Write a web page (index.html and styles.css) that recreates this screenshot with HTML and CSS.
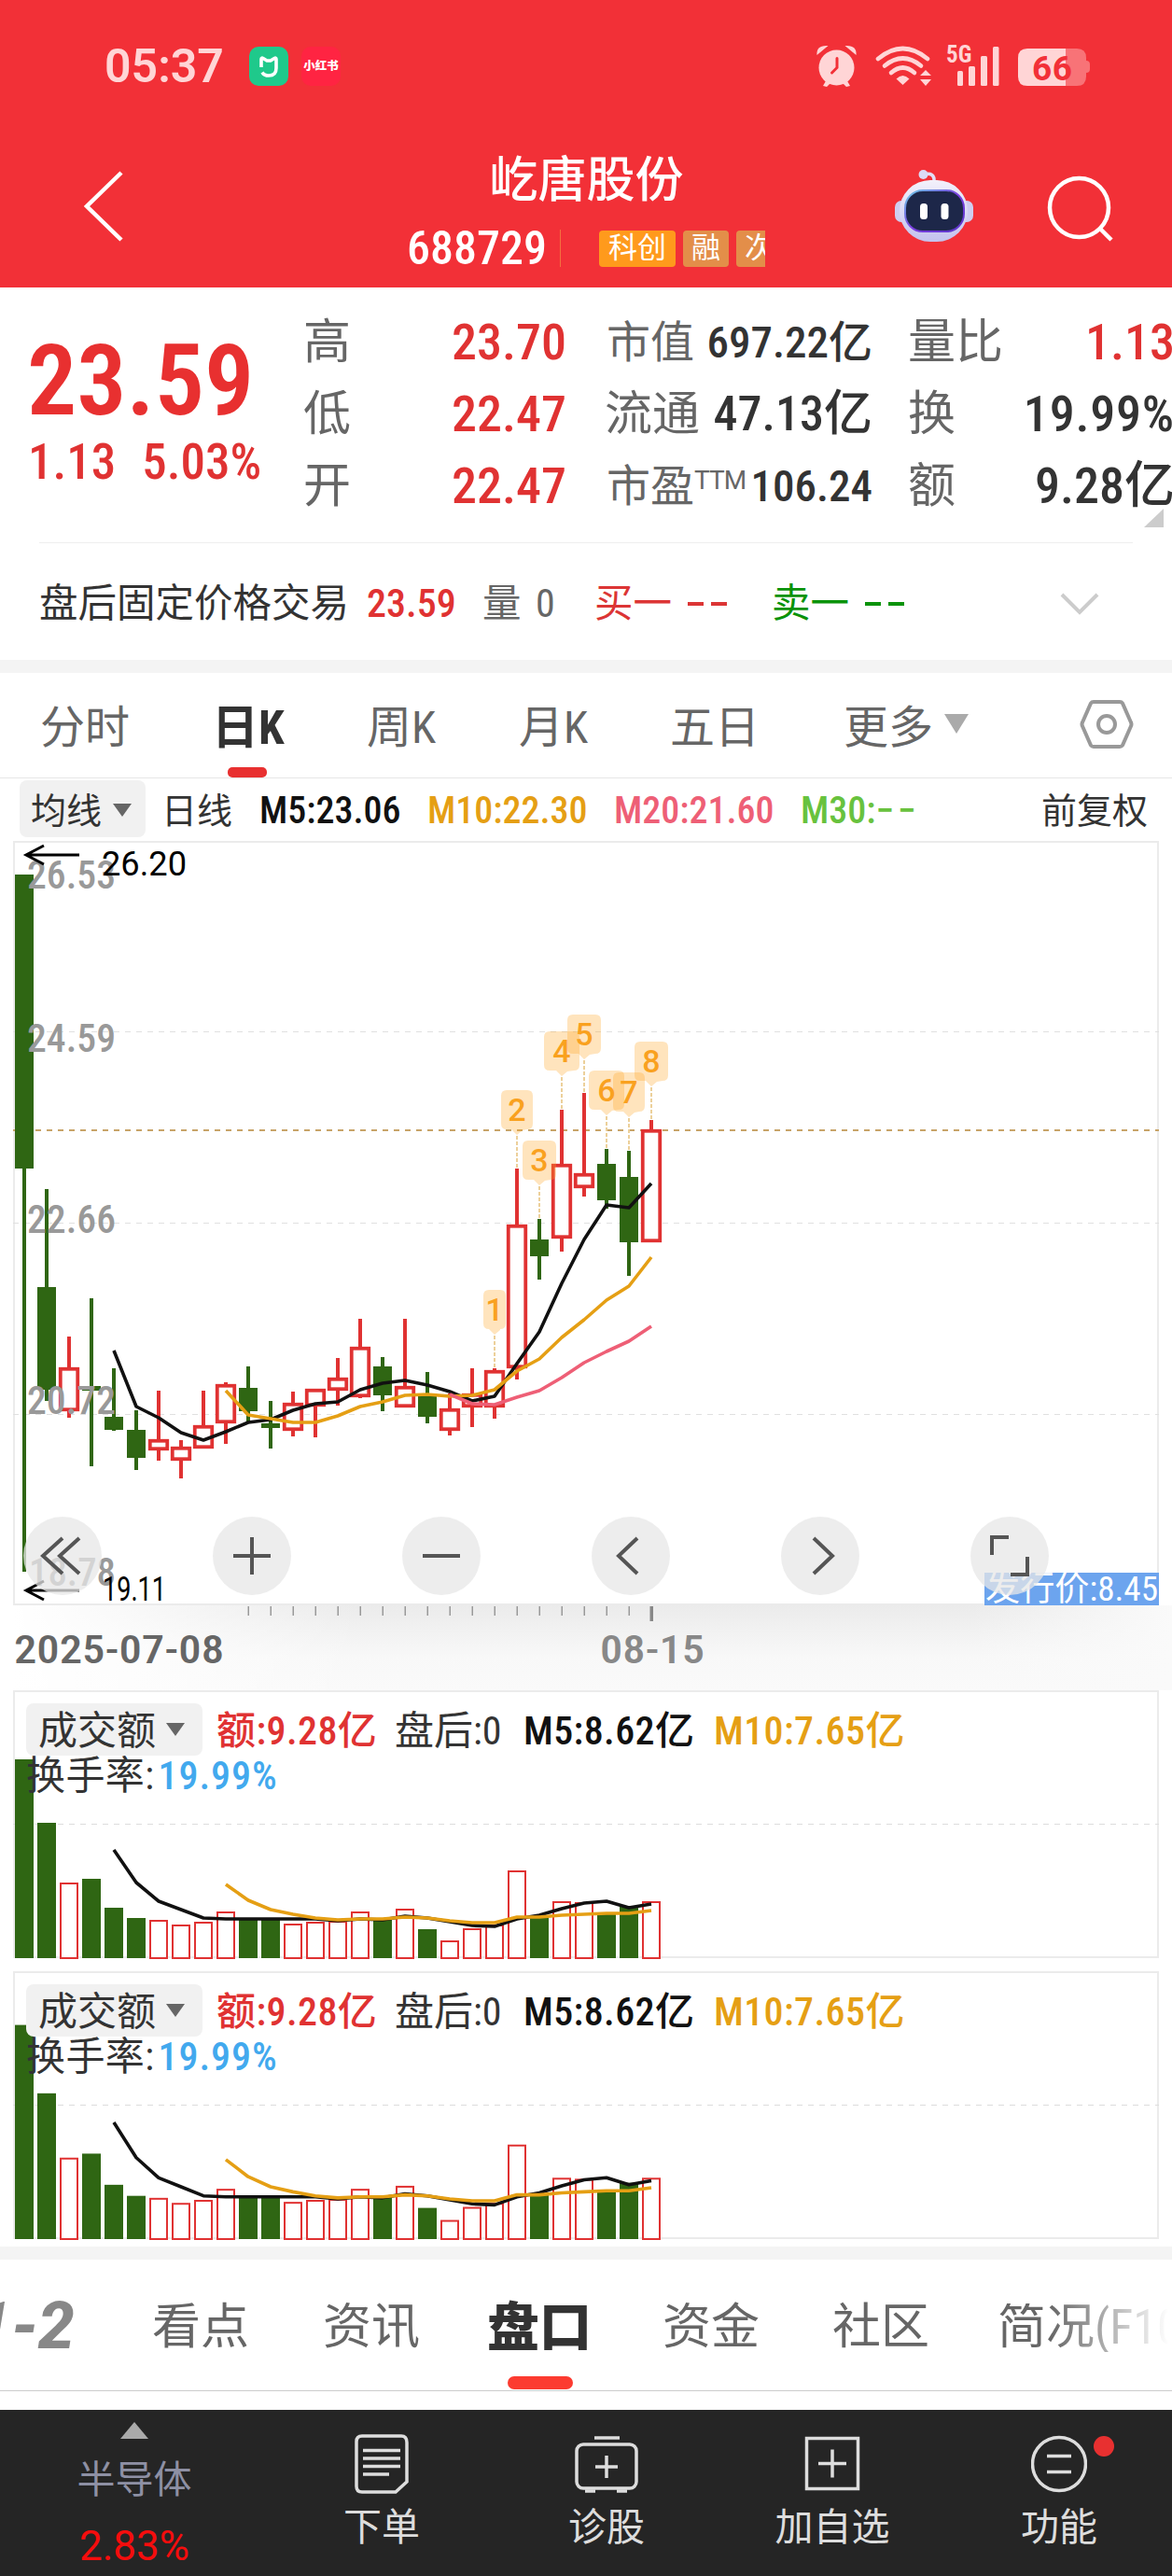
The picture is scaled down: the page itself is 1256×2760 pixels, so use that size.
FILE: index.html
```html
<!DOCTYPE html>
<html lang="zh-CN">
<head>
    <meta charset="UTF-8">
    <title>屹唐股份 688729</title>
    <link rel="stylesheet" href="styles.css">
</head>
<body>
    <header class="header">
        <div class="status-bar">
            <span class="clock">05:37</span>
            <svg class="app-icon" width="42" height="42" viewBox="0 0 42 42">
                <rect width="42" height="42" rx="10" fill="#1fc98b"/>
                <path d="M13 22V13.500q0-2 2-1l4 2.500h4l4-2.500q2-1 2 1V23q0 8-8 8q-5 0-7-3.500" fill="none" stroke="#fff" stroke-width="3.600"/>
            </svg>
            <span class="xhs">小红书</span>
            <svg class="status-icons" width="310" height="58" viewBox="870 42 310 58">
                <g fill="#ffd5d6">
                    <circle cx="896.500" cy="72.500" r="19"/>
                    <path d="M875.500 59q-1-11 12-10z"/>
                    <path d="M917.500 59q1-11-12-10z"/>
                    <path d="M882 92l4-7 5 3-5 5zM911 92l-4-7-5 3 5 5z"/>
                    <path d="M967.500 91l-7-6.500q7-7 14 0z"/>
                    <path d="M992 75l6 6h-12zM992 92l6-7h-12z"/>
                    <rect x="1026" y="76" width="6" height="16" rx="1.500"/>
                    <rect x="1038" y="71" width="7" height="21" rx="1.500"/>
                    <rect x="1051" y="60" width="7" height="32" rx="1.500"/>
                    <rect x="1064" y="50" width="6.500" height="42" rx="1.500"/>
                    <path d="M1101 52h41v40h-41q-10 0-10-10V62q0-10 10-10z"/>
                </g>
                <path d="M897 62.500v10l-5.500 5.500" fill="none" stroke="#f23037" stroke-width="3" stroke-linecap="round"/>
                <g fill="none" stroke="#ffd5d6" stroke-width="4.600" stroke-linecap="round">
                    <path d="M941 63q26.500-22 53 0"/>
                    <path d="M948 70.500q19.500-16 39 0"/>
                    <path d="M955 78q12.500-11 25 0"/>
                </g>
                <path d="M1142 52h12q10 0 10 10v3q4 0 4 4v5q0 4-4 4v4q0 10-10 10h-12z" fill="#f87377"/>
                <text x="1014" y="67" class="net">5G</text>
                <text x="1106" y="86" class="battery" textLength="43">66</text>
            </svg>
        </div>
        <div class="title-bar">
            <svg class="back" width="50" height="80" viewBox="86 181 50 80">
                <path d="M130 185L93 221L130 257" fill="none" stroke="#fff" stroke-width="4.500"/>
            </svg>
            <div class="stock">
                <h1>屹唐股份</h1>
                <div class="code-row">
                    <span class="code">688729</span>
                    <span class="tag tag-main">科创</span>
                    <span class="tag">融</span>
                    <span class="tag">次</span>
                </div>
            </div>
            <svg class="robot" width="88" height="84" viewBox="957 179 88 84">
                <defs>
                    <linearGradient id="shell" x1="0" y1="0" x2="0" y2="1">
                        <stop offset="0" stop-color="#f3f1fb"/>
                        <stop offset="1" stop-color="#c3c2ee"/>
                    </linearGradient>
                    <linearGradient id="rim" x1="0" y1="0" x2="1" y2="1">
                        <stop offset="0" stop-color="#6fd0e8"/>
                        <stop offset=".5" stop-color="#7a3fe0"/>
                        <stop offset="1" stop-color="#5a35c8"/>
                    </linearGradient>
                </defs>
                <rect x="959" y="215" width="84" height="23" rx="7" fill="#cfcdf0"/>
                <path d="M990 187q12-3 11 8" fill="none" stroke="#e2def6" stroke-width="3.500"/>
                <circle cx="989.500" cy="187" r="5" fill="#dcdaf6"/>
                <rect x="964" y="193" width="73" height="66" rx="33" fill="url(#shell)"/>
                <rect x="970" y="204" width="63" height="44" rx="19" fill="#1d2749" stroke="url(#rim)" stroke-width="2"/>
                <rect x="986" y="218" width="8" height="17" rx="3.500" fill="#fff"/>
                <rect x="1008.500" y="218" width="8" height="17" rx="3.500" fill="#fff"/>
            </svg>
            <svg class="search" width="76" height="76" viewBox="1120 185 76 76">
                <circle cx="1156.500" cy="222.500" r="31.500" fill="none" stroke="#fff" stroke-width="4.500"/>
                <path d="M1178 244L1191 257" stroke="#fff" stroke-width="4.500"/>
            </svg>
        </div>
    </header>

    <section class="quote">
        <div class="price-box">
            <div class="price">23.59</div>
            <div class="change"><span>1.13</span><span>5.03%</span></div>
        </div>
        <dl>
            <div><dt>高</dt><dd class="red">23.70</dd></div>
            <div><dt>低</dt><dd class="red">22.47</dd></div>
            <div><dt>开</dt><dd class="red">22.47</dd></div>
        </dl>
        <dl class="mid">
            <div class="small"><dt>市值</dt><dd>697.22亿</dd></div>
            <div><dt>流通</dt><dd class="tight">47.13亿</dd></div>
            <div class="small"><dt>市盈<sup>TTM</sup></dt><dd>106.24</dd></div>
        </dl>
        <dl class="last">
            <div><dt>量比</dt><dd class="red">1.13</dd></div>
            <div><dt>换</dt><dd class="wide">19.99%</dd></div>
            <div><dt>额</dt><dd>9.28亿</dd></div>
        </dl>
        <i class="corner"></i>
    </section>

    <section class="after-hours">
        <span>盘后固定价格交易</span>
        <span class="num red">23.59</span>
        <span class="gray">量</span>
        <span class="num gray">0</span>
        <span class="buy">买一</span>
        <span class="dash buy"><i></i><i></i></span>
        <span class="sell">卖一</span>
        <span class="dash sell"><i></i><i></i></span>
        <svg width="44" height="26" viewBox="0 0 44 26"><path d="M3 3L22 22L41 3" fill="none" stroke="#ccc" stroke-width="4"/></svg>
    </section>

    <nav class="period-tabs">
        <span>分时</span>
        <span class="active">日K</span>
        <span>周K</span>
        <span>月K</span>
        <span>五日</span>
        <span class="more">更多<i class="caret"></i></span>
        <svg width="58" height="54" viewBox="0 0 58 54" fill="none" stroke="#999" stroke-width="4">
            <path d="M15 3h28q2 0 3 1.500L55 25q1 2 0 4L46 49.500q-1 1.500-3 1.500H15q-2 0-3-1.500L3 29q-1-2 0-4L12 4.500Q13 3 15 3z"/>
            <circle cx="29" cy="27" r="9"/>
        </svg>
    </nav>

    <div class="ma-row">
        <span class="pill">均线<i class="caret"></i></span>
        <span class="cn">日线</span>
        <span class="m5">M5:23.06</span>
        <span class="m10">M10:22.30</span>
        <span class="m20">M20:21.60</span>
        <span class="m30">M30:<em>−−</em></span>
        <span class="cn">前复权</span>
    </div>

    <section class="chart">
        <svg id="kline" width="1256" height="912" viewBox="0 899 1256 912"></svg>
        <div class="controls">
            <button><svg viewBox="0 0 84 84"><path d="M42 23L21 42L42 61M60 23L39 42L60 61"/></svg></button>
            <button><svg viewBox="0 0 84 84"><path d="M22 42H62M42 22V62"/></svg></button>
            <button><svg viewBox="0 0 84 84"><path d="M22 42H62"/></svg></button>
            <button><svg viewBox="0 0 84 84"><path d="M49 23L29 42L49 61"/></svg></button>
            <button><svg viewBox="0 0 84 84"><path d="M35 23L55 42L35 61"/></svg></button>
            <button><svg viewBox="0 0 84 84"><path d="M23 41V22H41M61 43V62H43"/></svg></button>
        </div>
    </section>

    <section class="volume">
        <svg id="vol1" width="1256" height="289" viewBox="0 1811 1256 289"></svg>
        <div class="vol-head">
            <span class="pill">成交额<i class="caret"></i></span>
            <span class="red">额:9.28亿</span>
            <span>盘后:0</span>
            <span class="m5">M5:8.62亿</span>
            <span class="m10">M10:7.65亿</span>
            <span class="turnover">换手率:<b>19.99%</b></span>
        </div>
    </section>
    <section class="volume second">
        <svg id="vol2" width="1256" height="289" viewBox="0 1811 1256 289"></svg>
        <div class="vol-head">
            <span class="pill">成交额<i class="caret"></i></span>
            <span class="red">额:9.28亿</span>
            <span>盘后:0</span>
            <span class="m5">M5:8.62亿</span>
            <span class="m10">M10:7.65亿</span>
            <span class="turnover">换手率:<b>19.99%</b></span>
        </div>
    </section>

    <nav class="info-tabs">
        <span class="level">1-2</span>
        <span>看点</span>
        <span>资讯</span>
        <span class="active">盘口</span>
        <span>资金</span>
        <span>社区</span>
        <span class="fade">简况(F10)</span>
    </nav>

    <footer class="toolbar">
        <div class="sector">
            <i></i>
            <span>半导体</span>
            <b>2.83%</b>
        </div>
        <div class="tool">
            <svg width="58" height="64" viewBox="0 0 58 64">
                <path d="M8 2h42q6 0 6 7v42L44 62H8q-6 0-6-6V8q0-6 6-6z"/>
                <path d="M9 17.500h40M9 26h40M9 34.500h40M9 43h28"/>
            </svg>
            <span>下单</span>
        </div>
        <div class="tool">
            <svg width="68" height="64" viewBox="0 0 68 64">
                <path d="M21 4h27"/>
                <rect x="2" y="11" width="64" height="47" rx="7"/>
                <path d="M22 35h24M34 23v24M11 61h11M45 61h11"/>
            </svg>
            <span>诊股</span>
        </div>
        <div class="tool">
            <svg width="60" height="64" viewBox="0 0 60 64">
                <rect x="2.500" y="4.500" width="55" height="54"/>
                <path d="M15 31.500h30M30 16.500v30"/>
            </svg>
            <span>加自选</span>
        </div>
        <div class="tool">
            <svg width="60" height="64" viewBox="0 0 60 64">
                <circle cx="30" cy="32" r="28.500"/>
                <path d="M17 23.500h26M17 40.500h26"/>
            </svg>
            <i class="dot"></i>
            <span>功能</span>
        </div>
    </footer>

    <script>
    const RED = "#e03232";
    const GREEN = "#2f6613";
    const STEP = 24;
    const cx = i => 26 + STEP * i;

    // [up, body top, body bottom, wick top, wick bottom]
    const candles = [
        [0, 937, 1252, 937, 1684], [0, 1379, 1489, 1274, 1501], [1, 1465, 1512, 1432, 1519],
        [0, 1485, 1490, 1391, 1571], [0, 1518, 1532, 1466, 1533], [0, 1532, 1562, 1511, 1575],
        [1, 1542, 1554, 1490, 1565], [1, 1550, 1565, 1543, 1584], [1, 1527, 1552, 1490, 1552],
        [1, 1483, 1525, 1481, 1547], [0, 1487, 1512, 1464, 1525], [0, 1525, 1530, 1501, 1552],
        [1, 1503, 1533, 1491, 1539], [1, 1488, 1507, 1488, 1540], [1, 1476, 1490, 1455, 1506],
        [1, 1443, 1497, 1413, 1498], [0, 1464, 1495, 1454, 1512], [1, 1485, 1508, 1413, 1508],
        [0, 1494, 1518, 1470, 1525], [1, 1509, 1533, 1493, 1538], [1, 1493, 1508, 1466, 1529],
        [1, 1468, 1508, 1466, 1520], [1, 1312, 1466, 1252, 1478], [0, 1328, 1346, 1306, 1371],
        [1, 1247, 1327, 1189, 1341], [1, 1257, 1273, 1171, 1282], [0, 1247, 1286, 1231, 1295],
        [0, 1261, 1331, 1233, 1367], [1, 1210, 1331, 1200, 1331]
    ];
    const ma5 = [1447, 1507, 1519, 1535, 1543, 1534, 1524, 1521, 1511, 1504, 1502, 1489, 1482, 1479, 1484, 1491, 1501, 1496, 1461, 1427, 1375, 1328, 1291, 1294, 1268];
    const ma10 = [1490, 1516, 1520, 1524, 1524, 1517, 1507, 1502, 1495, 1494, 1496, 1495, 1489, 1469, 1456, 1433, 1414, 1393, 1378, 1347];
    const ma20 = [1494, 1504, 1505, 1497, 1490, 1476, 1460, 1448, 1437, 1421];

    // numbered markers above the last bars: [index, left, right, top]
    const badges = [
        [21, 518, 542, 1382], [22, 537, 571, 1168], [23, 560, 596, 1222], [24, 583, 621, 1105],
        [25, 608, 644, 1087], [26, 631, 669, 1147], [27, 657, 691, 1149], [28, 680, 716, 1116]
    ];

    const volumes = [1885, 1953, 2017, 2013, 2044, 2055, 2057, 2062, 2059, 2048, 2056, 2057, 2061, 2059, 2058, 2048, 2056, 2045, 2067, 2079, 2066, 2062, 2004, 2053, 2037, 2038, 2051, 2042, 2037];
    const vma5 = [1982, 2017, 2037, 2046, 2055, 2056, 2056, 2056, 2056, 2056, 2058, 2056, 2057, 2053, 2055, 2059, 2063, 2064, 2056, 2052, 2045, 2039, 2037, 2044, 2040];
    const vma10 = [2019, 2036, 2046, 2051, 2055, 2057, 2056, 2056, 2054, 2055, 2058, 2060, 2060, 2054, 2054, 2052, 2051, 2050, 2050, 2047];

    function rect(x, y, w, h, attrs) {
        return `<rect x="${x}" y="${y}" width="${w}" height="${h}" ${attrs}/>`;
    }

    function hline(y, color, width) {
        return `<path d="M14 ${y}H1242" stroke="${color}" stroke-width="${width}" stroke-dasharray="6 6"/>`;
    }

    function curve(values, start, color) {
        const points = values.map((y, i) => `${cx(start + i)},${y}`).join(" ");
        return `<polyline points="${points}" fill="none" stroke="${color}" stroke-width="3.600" stroke-linejoin="round"/>`;
    }

    function label(text, x, y, width, cls) {
        return `<text x="${x}" y="${y}" textLength="${width}" lengthAdjust="spacingAndGlyphs" class="${cls}">${text}</text>`;
    }

    function drawKline() {
        let s = `<defs>
            <linearGradient id="shadeX"><stop offset="0" stop-color="#fff"/><stop offset=".3" stop-color="#fff" stop-opacity="0"/></linearGradient>
            <linearGradient id="shadeY" x1="0" y1="0" x2="0" y2="1"><stop offset="0" stop-color="#ebebeb"/><stop offset=".6" stop-color="#f8f8f8"/><stop offset="1" stop-color="#fafafa"/></linearGradient>
            <linearGradient id="shadeEnd"><stop offset="0" stop-color="#fafafa" stop-opacity="0"/><stop offset="1" stop-color="#fafafa"/></linearGradient>
        </defs>`;
        s += rect(14, 1720, 1242, 91, 'fill="url(#shadeY)"');
        s += rect(14, 1720, 1242, 91, 'fill="url(#shadeX)"');
        s += rect(1040, 1720, 216, 91, 'fill="url(#shadeEnd)"');
        s += rect(15, 902, 1226, 817, 'fill="#fff" stroke="#ebebeb" stroke-width="2"');
        [1105.500, 1310.500, 1515.500].forEach(y => s += hline(y, "#e0e0e0", 1));
        s += hline(1211, "#c8a468", 2);

        candles.forEach(([up, top, bottom, high, low], i) => {
            const x = cx(i);
            const color = up ? RED : GREEN;
            s += rect(x - 2, high, 4, low - high, `fill="${color}"`);
            if (up) s += rect(x - 9.250, top + 1.750, 18.500, bottom - top - 3.500, `fill="#fff" stroke="${color}" stroke-width="3.800"`);
            else s += rect(x - 10, top, 20, bottom - top, `fill="${color}"`);
        });
        s += curve(ma5, 4, "#111");
        s += curve(ma10, 9, "#e59f14");
        s += curve(ma20, 19, "#ee5f76");

        badges.forEach(([i, left, right, top], n) => {
            const x = cx(i);
            s += `<path d="M${x} ${top + 49}V${candles[i][3]}" stroke="#ecd09a" stroke-width="2" stroke-dasharray="4 2"/>`;
            s += `<path d="M${left + 6} ${top}H${right - 6}q6 0 6 6v30q0 6-6 6L${x + 6} ${top + 43}L${x} ${top + 48}L${x - 6} ${top + 42}H${left + 6}q-6 0-6-6v-30q0-6 6-6z" fill="#ffa524" fill-opacity=".3"/>`;
            s += `<text x="${(left + right) / 2}" y="${top + 33}" class="badge">${n + 1}</text>`;
        });

        s += label("26.53", 29, 952, 95, "axis") + label("24.59", 29, 1127, 95, "axis") + label("22.66", 29, 1321, 95, "axis") + label("20.72", 29, 1515, 95, "axis") + label("18.78", 31, 1699, 93, "axis");
        s += label("26.20", 109, 938, 91, "extreme") + label("19.11", 110, 1715, 68, "extreme");
        s += '<path d="M28 916H85M47 906L28 916L47 926M28 1704H85M47 1694L28 1704L47 1714" fill="none" stroke="#000" stroke-width="3"/>';
        s += rect(1055, 1685, 187, 35, 'fill="#6ca4ee"') + label("发行价:8.45", 1056, 1715, 185, "issue");

        for (let x = 266; x < 690; x += STEP) s += rect(x - 0.500, 1721, 1.500, 10, 'fill="#999"');
        s += rect(696.500, 1721, 3.500, 16, 'fill="#888"');
        s += label("2025-07-08", 15, 1782, 225, "date") + label("08-15", 643, 1782, 112, "date light");
        document.getElementById("kline").innerHTML = s;
    }

    function drawVolume(id, scale) {
        const y = v => 2098 - (2098 - v) * scale;
        let s = rect(15, 1812, 1226, 285, 'fill="#fff" stroke="#ebebeb" stroke-width="2"') + hline(1954.500, "#ddd", 1);
        volumes.forEach((v, i) => {
            const x = cx(i);
            if (candles[i][0]) s += rect(x - 9, y(v) + 1, 18, 2097 - y(v), `fill="#fff" stroke="${RED}" stroke-width="2"`);
            else s += rect(x - 10, y(v), 20, 2098 - y(v), `fill="${GREEN}"`);
        });
        s += curve(vma5.map(y), 4, "#111") + curve(vma10.map(y), 9, "#e59f14");
        document.getElementById(id).innerHTML = s;
    }

    drawKline();
    drawVolume("vol1", 1);
    drawVolume("vol2", 1.077);
    </script>
</body>
</html>
```
FILE: styles.css
```css
* {
    box-sizing: border-box;
}
body {
    margin: 0;
    width: 1256px;
    height: 2760px;
    overflow: hidden;
    background: #fff;
    color: #333;
    font-family: Roboto, "Noto Sans CJK SC", sans-serif;
    font-stretch: 87.5%;
    line-height: 1;
}
svg {
    display: block;
}
i {
    display: block;
}
span, dt, dd {
    white-space: nowrap;
}
.red { color: #e03232; }
.gray { color: #666; }
.m5 { color: #111; }
.m10 { color: #e59f14; }
.m20 { color: #ee5f76; }
.m30 { color: #68c23e; }

/* header */
.header {
    height: 308px;
    background: #f23037;
    color: #fff;
}
.status-bar {
    display: flex;
    align-items: center;
    height: 142px;
    padding-left: 112px;
}
.clock {
    width: 155px;
    font-size: 50px;
    font-weight: 600;
    font-stretch: 100%;
    color: #ffd5d6;
}
.xhs {
    width: 42px;
    height: 42px;
    margin-left: 14px;
    border-radius: 10px;
    background: #ff2442;
    font-size: 12.500px;
    font-weight: 900;
    line-height: 42px;
    text-align: center;
}
.status-icons {
    margin-left: 505px;
}
.net {
    fill: #ffd5d6;
    font-size: 25px;
    font-weight: 700;
}
.battery {
    fill: #f23037;
    font-size: 37px;
    font-weight: 700;
    font-stretch: 100%;
}
.title-bar {
    display: flex;
    height: 166px;
    padding-left: 86px;
}
.back {
    margin-top: 39px;
}
.stock {
    width: 383px;
    margin-left: 301px;
    overflow: hidden;
}
h1 {
    margin: 25px 0 0;
    font-size: 52px;
    font-weight: 500;
    line-height: 54px;
    text-align: center;
}
.code-row {
    display: flex;
    align-items: center;
    height: 44px;
    margin-top: 23px;
    overflow: hidden;
}
.code {
    flex: none;
    width: 164px;
    margin-right: 41px;
    border-right: 1px solid #f4703f;
    font-size: 50px;
    line-height: 40px;
    font-weight: 500;
    text-indent: -1px;
}
.tag {
    flex: none;
    height: 39px;
    margin-right: 8px;
    padding: 0 9px;
    border-radius: 4px;
    background: #e38e49;
    font-size: 31px;
    line-height: 38px;
}
.tag-main {
    padding: 0 10px;
    background: #ff9a1c;
}
.robot {
    margin: 37px 0 0 137px;
}
.search {
    margin: 43px 0 0 75px;
}

/* quote */
.quote {
    position: relative;
    display: grid;
    grid-template-columns: 298px 276px 281px 279px;
    height: 273px;
    margin-left: 30px;
    padding-top: 20px;
}
.price {
    margin: 34px 0 0 -1px;
    font-size: 106px;
    font-weight: 600;
    line-height: 92px;
    color: #e83030;
}
.change {
    display: flex;
    gap: 28px;
    margin-top: 15px;
    font-size: 53px;
    font-weight: 500;
    color: #e03232;
}
dl {
    margin: 0;
}
dl div {
    display: flex;
    justify-content: space-between;
    align-items: center;
    height: 77px;
    font-size: 51px;
}
dt {
    margin-left: -3px;
    color: #666;
}
dd {
    margin: 0 -3px 0 0;
    font-size: 54px;
    font-weight: 500;
}
dl .small, .small dd {
    font-size: 47px;
}
.small dt {
    margin-left: -1px;
}
.mid {
    margin: 0 -47px 0 47px;
}
.mid .tight {
    font-size: 52px;
}
.last {
    margin-left: 91px;
    margin-right: -92px;
}
.last .wide {
    letter-spacing: 0.8px;
}
sup {
    font-size: 28px;
    line-height: 0;
    vertical-align: 13px;
    font-stretch: 100%;
    letter-spacing: -1px;
}
.corner {
    position: absolute;
    left: 1196px;
    top: 237px;
    border-left: 21px solid transparent;
    border-bottom: 20px solid #ccc;
}
.after-hours {
    display: grid;
    grid-template-columns: 351px 124px 57px 63px 100px 90px 100px 208px 44px;
    align-items: center;
    height: 126px;
    margin: 0 42px;
    border-top: 1px solid #eee;
    font-size: 41.500px;
    padding-top: 4px;
}
.after-hours .num {
    font-size: 42px;
    font-weight: 500;
}
.after-hours .gray {
    font-weight: 400;
}
.buy { color: #dc3535; }
.sell { color: #0a930a; }
.dash {
    display: flex;
    gap: 8px;
}
.dash i {
    width: 17px;
    height: 4px;
    background: currentColor;
}

/* period tabs */
.period-tabs {
    display: grid;
    grid-template-columns: 187px 163px 163px 162px 186px 253px 58px;
    align-items: center;
    height: 127px;
    padding: 6px 0 0 43px;
    border-top: 14px solid #f4f4f4;
    border-bottom: 1px solid #e6e6e6;
    font-size: 48px;
    color: #666;
}
.period-tabs svg {
    margin-top: -9px;
}
.period-tabs .active {
    position: relative;
    font-size: 50px;
    font-weight: 700;
    color: #333;
    margin-left: -3px;
}
.period-tabs .active::after {
    content: "";
    position: absolute;
    left: 17px;
    bottom: -28px;
    width: 42px;
    height: 11px;
    border-radius: 5px;
    background: #e83030;
}
.caret {
    display: inline-block;
    border: 10px solid transparent;
    border-top: 14px solid #666;
    border-bottom: 0;
}
.more .caret {
    margin: 0 0 10px 12px;
    border-width: 21px 13px 0;
    border-top-color: #aaa;
}

/* moving averages */
.ma-row {
    display: grid;
    grid-template-columns: 155px 102px 180px 200px 200px 261px auto;
    align-items: center;
    height: 65px;
    padding-left: 21px;
    font-size: 40px;
    font-weight: 500;
}
.ma-row > span {
    padding-top: 4px;
}
.ma-row .cn {
    margin-left: -3px;
    font-size: 38px;
    font-weight: 400;
}
.ma-row em {
    font-style: normal;
    letter-spacing: 4px;
}
.pill {
    display: flex;
    align-items: center;
    border-radius: 8px;
    background: #f1f1f1;
    font-weight: 400;
}
.ma-row .pill {
    width: 135px;
    height: 61px;
    padding-left: 12px;
    font-size: 38px;
}
.ma-row .caret {
    margin: -2px 0 0 12px;
}

/* chart */
.chart, .volume {
    display: grid;
}
.chart > *, .volume > * {
    grid-area: 1 / 1;
}
.axis {
    fill: #999;
    font-size: 42px;
    font-weight: 500;
}
.extreme {
    font-size: 37px;
    font-stretch: 100%;
}
.issue {
    fill: #fff;
    font-size: 37px;
}
.date {
    fill: #666;
    font-size: 42px;
    font-weight: 500;
}
.date.light {
    fill: #888;
}
.badge {
    fill: #f9a11f;
    font-size: 34px;
    font-weight: 500;
    font-stretch: 100%;
    text-anchor: middle;
}
.controls {
    display: flex;
    gap: 119px;
    align-self: end;
    margin: 0 0 102px 25px;
}
.controls button {
    width: 84px;
    height: 84px;
    padding: 0;
    border: 0;
    border-radius: 50%;
    background: rgba(231, 231, 231, 0.75);
}
.controls path {
    fill: none;
    stroke: #555;
    stroke-width: 4;
}

/* volume */
.volume.second {
    margin-top: 12px;
}
.vol-head {
    display: grid;
    grid-template-columns: 204px 191px 138px 204px auto;
    grid-template-rows: 56px 40px;
    align-items: center;
    align-content: start;
    padding: 14px 0 0 28px;
    font-size: 42px;
}
.vol-head > span {
    padding-top: 3px;
}
.vol-head .m5, .vol-head .m10, .vol-head .red {
    font-weight: 500;
    letter-spacing: 0.4px;
}
.vol-head .pill {
    width: 189px;
    height: 56px;
    padding-left: 13px;
}
.vol-head .caret {
    margin: -3px 0 0 11px;
}
.vol-head .turnover {
    grid-column: 1 / -1;
    letter-spacing: 0.4px;
}
.turnover b {
    margin-left: 4px;
    font-weight: 500;
    letter-spacing: 1px;
    color: #42a9ee;
}

/* info tabs */
.info-tabs {
    display: grid;
    grid-template-columns: 163px 183px 176px 188px 182px 177px auto;
    align-items: center;
    height: 155px;
    margin-top: 6px;
    padding-top: 6px;
    border-top: 14px solid #f4f4f4;
    border-bottom: 1px solid #ccc;
    font-size: 52px;
    color: #666;
}
.level {
    margin: -4px 0 0 -27px;
    color: #888;
    font-size: 70px;
    font-style: italic;
    font-weight: 800;
    font-stretch: 100%;
}
.info-tabs .active {
    position: relative;
    font-size: 56px;
    font-weight: 900;
    color: #333;
}
.info-tabs .active::after {
    content: "";
    position: absolute;
    left: 22px;
    bottom: -38px;
    width: 70px;
    height: 14px;
    border-radius: 7px;
    background: #fc3b30;
}
.fade {
    color: transparent;
    background: linear-gradient(90deg, #666 30%, #fff 98%);
    background-clip: text;
    -webkit-background-clip: text;
    width: 187px;
    overflow: hidden;
}

/* toolbar */
.toolbar {
    display: grid;
    grid-template-columns: 288px 242px 240px 244px 242px;
    height: 180px;
    margin-top: 20px;
    background: #252525;
    color: #ddd;
}
.sector {
    display: flex;
    flex-direction: column;
    align-items: center;
    padding-top: 13px;
    font-size: 41px;
}
.sector i {
    border: 15px solid transparent;
    border-bottom: 18px solid #aaa;
    border-top: 0;
}
.sector span {
    margin-top: 24px;
    color: #8e90a4;
}
.sector b {
    margin-top: 28px;
    font-size: 44px;
    font-weight: 400;
    font-stretch: 100%;
    color: #f50d0d;
}
.tool {
    position: relative;
    display: flex;
    flex-direction: column;
    align-items: center;
    gap: 16px;
    padding-top: 26px;
    font-size: 41px;
}
.tool svg {
    fill: none;
    stroke: #ddd;
    stroke-width: 3.500;
}
.dot {
    position: absolute;
    left: 158px;
    top: 28px;
    width: 22px;
    height: 22px;
    border-radius: 50%;
    background: #e83030;
}
```
